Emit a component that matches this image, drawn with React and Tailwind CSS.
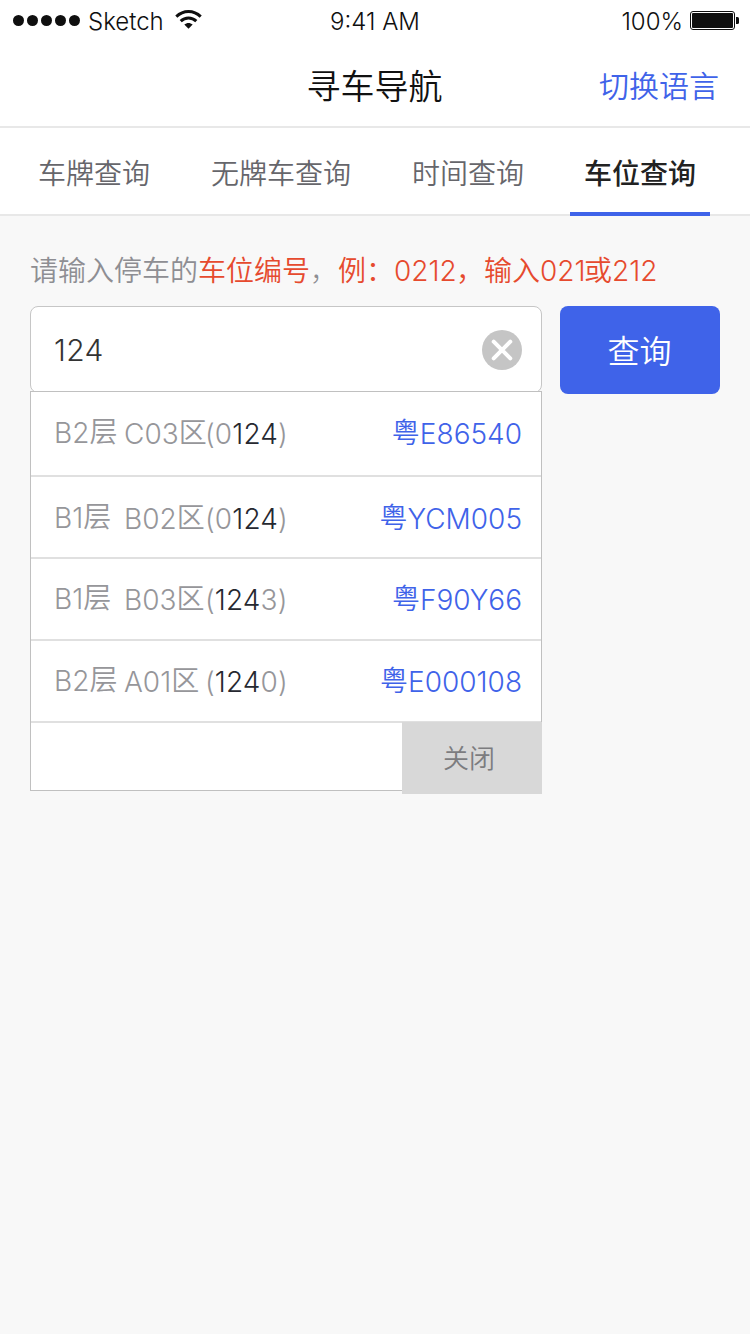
import React from "react";

const TABS = [
  { label: "车牌查询", pos: "ml-[23px]" },
  { label: "无牌车查询", pos: "ml-[31px]" },
  { label: "时间查询", pos: "ml-[31px]" },
  { label: "车位查询", pos: "ml-[31px]", active: true },
];

const ROWS = [
  { floor: "B2", zone: "C03", pre: "0", hit: "124", post: "", plate: "E86540", h: "h-[85px]" },
  { floor: "B1", zone: "B02", pre: "0", hit: "124", post: "", plate: "YCM005", h: "h-[82px] pt-[3px]" },
  { floor: "B1", zone: "B03", pre: "", hit: "124", post: "3", plate: "F90Y66", h: "h-[82px] pt-[1px]" },
  { floor: "B2", zone: "A01", pre: "", hit: "124", post: "0", plate: "E000108", h: "h-[82px] pt-[1px]" },
];

function StatusBar() {
  return (
    <div className="flex h-10 items-center text-[24px] leading-10 text-[#0f0f0f]">
      <div className="flex flex-1 items-center pl-[13px]">
        <div className="flex gap-[3px]">
          {[0, 1, 2, 3, 4].map((i) => (
            <span key={i} className="size-[11px] rounded-full bg-[#0f0f0f]" />
          ))}
        </div>
        <span className="ml-[8px] pt-[3px]">Sketch</span>
        <svg className="ml-[11px]" width="27" height="20" viewBox="0 0 27 20" fill="none" stroke="#0f0f0f" strokeWidth="3">
          <path d="M1.3 6.6C8.4-.2 18.6-.2 25.7 6.6" />
          <path d="M5.7 11.2C10.2 6.9 16.8 6.9 21.3 11.2" />
          <path d="M9.3 14.6C12 12.3 15 12.3 17.7 14.6L13.5 18.8Z" fill="#0f0f0f" stroke="none" />
        </svg>
      </div>
      <span className="pr-[2px] pt-[3px]">9:41 AM</span>
      <div className="flex flex-1 items-center justify-end pr-[11px]">
        <span className="pt-[3px]">100%</span>
        <svg className="ml-[7px]" width="49" height="19" viewBox="0 0 49 19">
          <rect x="0.5" y="0.5" width="44" height="18" rx="2.5" fill="none" stroke="#0f0f0f" />
          <rect x="2" y="2" width="41" height="15" rx="1" fill="#0f0f0f" />
          <path d="M46 6h1.5q1.5 0 1.5 1.5v4q0 1.5-1.5 1.5H46z" fill="#0f0f0f" />
        </svg>
      </div>
    </div>
  );
}

export default function App() {
  return (
    <div className="h-[1334px] w-[750px] bg-[#f8f8f8] font-['Inter','Noto_Sans_CJK_SC',sans-serif] font-light">
      <header className="h-[128px] border-b-2 border-[#e8e8e8] bg-white">
        <StatusBar />
        <div className="flex h-[86px] items-center px-[31px] pb-[2px] pt-[9px]">
          <span className="flex-1" />
          <h1 className="pr-px text-[34px] font-[350] text-[#111]">寻车导航</h1>
          <button className="flex-1 text-right text-[30px] font-[350] text-[#3f63e9]">切换语言</button>
        </div>
      </header>

      <nav className="flex h-[88px] border-b-2 border-[#e8e8e8] bg-white">
        {TABS.map((t) => (
          <button
            key={t.label}
            className={
              t.active
                ? `${t.pos} h-[88px] w-[140px] border-b-4 border-[#3f63e9] pt-[7px] text-[28px] font-medium text-[#222]`
                : `${t.pos} h-[88px] shrink-0 border-b-4 border-transparent px-[15px] pt-[7px] text-[28px] font-[350] text-[#66666b]`
            }
          >
            {t.label}
          </button>
        ))}
      </nav>

      <main className="px-[30px]">
        <p className="flex h-[90px] items-center whitespace-nowrap pt-[20px] text-[28px] font-[350] text-[#8e8e93]">
          <span className="w-[168px]">请输入停车的</span>
          <span className="w-[112px] text-[#e64a2e]">车位编号</span>
          <span className="w-[28px] font-light">，</span>
          <span className="w-[56px] text-[#e64a2e]">例：</span>
          <span className="w-[62px] font-light text-[#e64a2e]">0212</span>
          <span className="w-[28px] text-[#e64a2e]">，</span>
          <span className="w-[56px] text-[#e64a2e]">输入</span>
          <span className="w-[44px] font-light text-[#e64a2e]">021</span>
          <span className="w-[28px] text-[#e64a2e]">或</span>
          <span className="font-light text-[#e64a2e]">212</span>
        </p>

        <div className="flex items-start gap-[18px]">
          <div className="w-[512px]">
            <div className="flex h-[87px] items-center justify-between rounded-[8px] border border-[#c6c6c6] bg-white pl-[23px] pr-[19px]">
              <span className="pt-[2px] text-[30px] tracking-[0.4px] text-[#333]">124</span>
              <svg width="40" height="40" viewBox="0 0 40 40">
                <circle cx="20" cy="20" r="20" fill="#c5c5c5" />
                <path d="M11.7 11.7L28.3 28.3M28.3 11.7L11.7 28.3" stroke="#fff" strokeWidth="4" strokeLinecap="round" />
              </svg>
            </div>
            <div className="-mt-[2px] h-[400px] border border-[#c0c0c0] bg-white text-[28px]">
              {ROWS.map((r) => (
                <div
                  key={r.plate}
                  className={`${r.h} flex items-center border-b-2 border-[#e0e0e0] pl-[23px] pr-[19px] leading-[42px] text-[#96969a]`}
                >
                  <span className="w-[70px] whitespace-nowrap pb-[2px]">
                    {r.floor}
                    <span className="align-[1px] font-[350]">层</span>
                  </span>
                  <span className="w-[81px] whitespace-nowrap">
                    {r.zone}
                    <span className="align-[1px] font-[350]">区</span>
                  </span>
                  <span className="tracking-[0.1px]">
                    ({r.pre}
                    <span className="font-[350] text-[#262830]">{r.hit}</span>
                    {r.post})
                  </span>
                  <span className="ml-auto text-[#3f63e9]">
                    <span className="align-[1px] font-[350]">粤</span>
                    {r.plate}
                  </span>
                </div>
              ))}
              <div className="-mr-px -mt-px flex justify-end">
                <button className="h-[72px] w-[140px] bg-[#d8d8d8] pr-[6px] text-[26px] font-[350] text-[#7c7c7f]">关闭</button>
              </div>
            </div>
          </div>
          <button className="h-[88px] w-[160px] rounded-[8px] bg-[#3f63e9] pr-[7px] pl-[6px] pt-[4px] text-[32px] font-[350] text-white">查询</button>
        </div>
      </main>
    </div>
  );
}
